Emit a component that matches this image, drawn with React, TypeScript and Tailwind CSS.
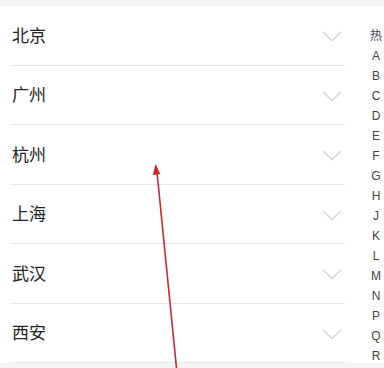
const cities = ['北京', '广州', '杭州', '上海', '武汉', '西安'];
const letters = ['热', 'A', 'B', 'C', 'D', 'E', 'F', 'G', 'H', 'J', 'K', 'L', 'M', 'N', 'P', 'Q', 'R'];

function CityRow({ name }: { name: string }) {
  return (
    <div className="h-[59.5px] flex items-center justify-between border-b border-[#e8e8e8] ml-[10px]">
      <span className="text-[17px] text-[#222] pl-[2px]">{name}</span>
      <svg width="20" height="11" viewBox="0 0 20 11" className="mr-[3px] mt-[3px]" fill="none">
        <path d="M1 1 L10 9.5 L19 1" stroke="#d4d4d4" strokeWidth="1.3" />
      </svg>
    </div>
  );
}

export default function App() {
  return (
    <div
      className="relative w-[384px] h-[368px] bg-white overflow-hidden"
      style={{ fontFamily: '"Noto Sans", "Noto Sans CJK SC", sans-serif' }}
    >
      <div className="h-[6px] bg-[#f4f4f4]" />
      <div className="flex">
        <div className="w-[345px]">
          {cities.map((c) => (
            <CityRow key={c} name={c} />
          ))}
        </div>
        <div
          className="flex-1 flex flex-col items-center pt-[20px] pl-[23px]"
          style={{ fontFamily: '"Liberation Sans", "Noto Sans CJK SC", sans-serif' }}
        >
          {letters.map((l) => (
            <span key={l} className="h-[20px] leading-[20px] text-[12px] text-[#444]">
              {l}
            </span>
          ))}
        </div>
      </div>
      <div className="absolute left-0 right-0 top-[363px] h-[5px] bg-[#f4f4f4]" />
      <svg className="absolute left-0 top-0" width="384" height="368" viewBox="0 0 384 368">
        <line x1="176.5" y1="368" x2="157" y2="172" stroke="#c42a30" strokeWidth="1.6" />
        <path d="M155.6 164 L152.8 175 L160.4 174.2 Z" fill="#c42a30" />
      </svg>
    </div>
  );
}
